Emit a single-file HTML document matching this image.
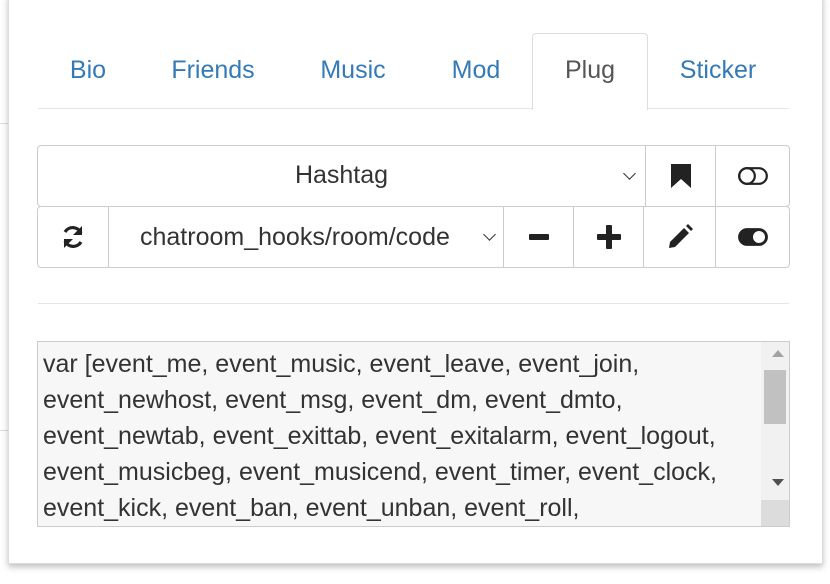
<!DOCTYPE html>
<html><head><style>
body{margin:0;width:830px;height:584px;background:#fff;font-family:"Liberation Sans",sans-serif;position:relative;overflow:hidden}
.panel{position:absolute;left:8px;top:-5px;width:813px;height:567px;background:#fff;border:1px solid #ddd;box-shadow:0 3px 6px rgba(0,0,0,.25)}
.tab{position:absolute;top:56px;font-size:25px;color:#337ab7;transform:translateX(-50%)}
.active{position:absolute;left:532px;top:33px;width:114px;height:76px;border:1px solid #ddd;border-bottom:none;border-radius:4px 4px 0 0;background:#fff}
.line{position:absolute;left:38px;width:751px;height:1px;background:#e5e5e5}
.row{position:absolute;left:37px;width:751px;border:1px solid #ccc;border-radius:4px;background:#fff}
.c{position:absolute;top:0;bottom:0;border-left:1px solid #ccc;display:flex;align-items:center;justify-content:center;color:#333}
.sel{position:absolute;top:0;bottom:0;display:flex;align-items:center;justify-content:center;font-size:25px;color:#333}
.chev{position:absolute;top:50%;margin-top:-7px;width:8px;height:8px;border-right:1.5px solid #333;border-bottom:1.5px solid #333;transform:rotate(45deg)}
.ta{position:absolute;left:37px;top:341px;width:751px;height:184px;border:1px solid #ccc;background:#f7f7f7;overflow:hidden}
.ta pre{margin:0;padding:4px 0 0 5px;font:25px/36px "Liberation Sans",sans-serif;color:#333;white-space:pre}
</style></head><body>
<div style="position:absolute;left:0;top:123px;width:8px;height:1px;background:#ddd"></div>
<div style="position:absolute;left:0;top:430px;width:8px;height:1px;background:#ddd"></div>
<div class="panel"></div>
<div class="line" style="top:108px"></div>
<div class="active"></div>
<div class="tab" style="left:88px">Bio</div>
<div class="tab" style="left:213px">Friends</div>
<div class="tab" style="left:353px">Music</div>
<div class="tab" style="left:476px">Mod</div>
<div class="tab" style="left:590px;color:#555">Plug</div>
<div class="tab" style="left:718px">Sticker</div>

<div class="row" style="top:145px;height:60px">
 <div class="sel" style="left:0;width:607px;padding-bottom:2px;box-sizing:border-box">Hashtag</div>
 <div class="chev" style="left:587px"></div>
 <div class="c" style="left:607px;width:70px"><svg width="20" height="24" viewBox="0 0 20 24"><path d="M0 0H20V24L10 15L0 24Z" fill="#222"/></svg></div>
 <div class="c" style="left:677px;width:74px"><svg width="30" height="18" viewBox="0 0 30 18"><rect x="1.2" y="1.2" width="27.6" height="15.6" rx="7.8" fill="none" stroke="#222" stroke-width="2.2"/><circle cx="9" cy="9" r="7.8" fill="none" stroke="#222" stroke-width="2.2"/></svg></div>
</div>
<div class="row" style="top:206px;height:60px">
 <div class="c" style="left:0;width:70px;border-left:none"><svg width="24" height="26" viewBox="0 0 24 26"><path d="M20 9A9 9 0 0 0 4 8" fill="none" stroke="#222" stroke-width="3.2"/><path d="M21 2V11H12Z" fill="#222"/><path d="M4 17A9 9 0 0 0 20 18" fill="none" stroke="#222" stroke-width="3.2"/><path d="M3 24V15H12Z" fill="#222"/></svg></div>
 <div class="c" style="left:70px;width:395px;font-size:25px;justify-content:flex-start;padding-left:31px;box-sizing:border-box">chatroom_hooks/room/code</div>
 <div class="chev" style="left:447px"></div>
 <div class="c" style="left:465px;width:70px"><svg width="20" height="6"><rect width="20" height="6" rx="1" fill="#222"/></svg></div>
 <div class="c" style="left:535px;width:70px"><svg width="24" height="24"><rect x="9" width="6" height="24" rx="1" fill="#222"/><rect y="9" width="24" height="6" rx="1" fill="#222"/></svg></div>
 <div class="c" style="left:605px;width:72px"><svg width="26" height="26" viewBox="0 0 26 26"><path d="M2 24L3 18L17 4L22 9L8 23Z" fill="#222"/><path d="M19 2L21 0L26 5L24 7Z" fill="#222"/></svg></div>
 <div class="c" style="left:677px;width:74px"><svg width="30" height="18" viewBox="0 0 30 18"><rect x="1.2" y="1.2" width="27.6" height="15.6" rx="7.8" fill="#222" stroke="#222" stroke-width="2.2"/><circle cx="21" cy="9" r="6" fill="#fff"/></svg></div>
</div>
<div class="line" style="top:303px"></div>
<div class="ta"><pre>var [event_me, event_music, event_leave, event_join,
event_newhost, event_msg, event_dm, event_dmto,
event_newtab, event_exittab, event_exitalarm, event_logout,
event_musicbeg, event_musicend, event_timer, event_clock,
event_kick, event_ban, event_unban, event_roll,</pre>
 <div style="position:absolute;right:0;top:0;width:28px;height:184px;background:#f1f1f1"></div>
 <div style="position:absolute;right:5px;top:8px;width:0;height:0;border:6px solid transparent;border-bottom:7px solid #a3a3a3;border-top:none"></div>
 <div style="position:absolute;right:3px;top:28px;width:22px;height:54px;background:#c1c1c1"></div>
 <div style="position:absolute;right:5px;top:137px;width:0;height:0;border:6px solid transparent;border-top:7px solid #505050;border-bottom:none"></div>
 <div style="position:absolute;right:0;bottom:0;width:28px;height:26px;background:#dcdcdc"></div>
</div>
</body></html>
